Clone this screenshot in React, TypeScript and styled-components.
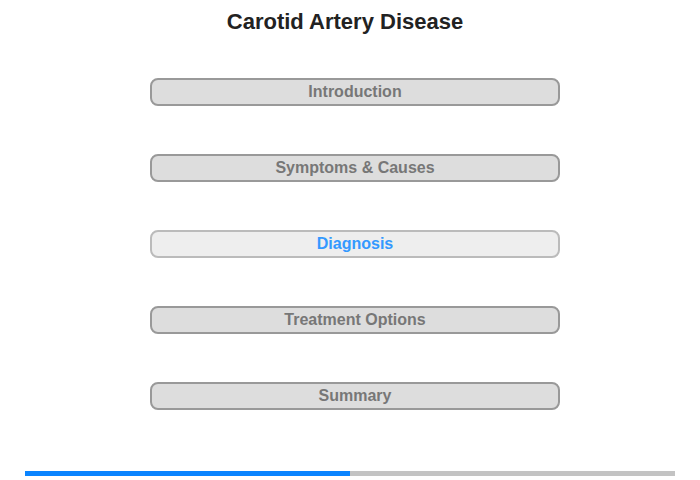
import React from "react";
import styled, { createGlobalStyle } from "styled-components";

const Global = createGlobalStyle`
  html, body { margin: 0; padding: 0; background: #fff; }
  body { font-family: "Liberation Sans", Arial, sans-serif; }
`;

const Page = styled.div`
  width: 700px;
  height: 480px;
  display: flex;
  flex-direction: column;
  box-sizing: border-box;
  padding-top: 9px;
`;

const Title = styled.h1`
  margin: 0;
  width: 690px;
  text-align: center;
  font-size: 22px;
  line-height: 26px;
  font-weight: bold;
  color: #222;
`;

const Menu = styled.div`
  display: flex;
  flex-direction: column;
  gap: 48px;
  margin: 43px 0 0 150px;
  width: 410px;
`;

const MenuButton = styled.button<{ $active?: boolean }>`
  box-sizing: border-box;
  width: 410px;
  height: 28px;
  border-radius: 8px;
  border: 2px solid ${(p) => (p.$active ? "#bbbbbb" : "#999999")};
  background: ${(p) => (p.$active ? "#eeeeee" : "#dddddd")};
  color: ${(p) => (p.$active ? "#3399ff" : "#777777")};
  font-family: "Liberation Sans", Arial, sans-serif;
  font-weight: bold;
  font-size: 16px;
  line-height: 24px;
  padding: 0;
  text-align: center;
  cursor: pointer;
`;

const Progress = styled.div`
  margin: 61px 0 0 25px;
  width: 650px;
  height: 5px;
  background: #c3c3c3;
  display: flex;
`;

const ProgressFill = styled.div`
  height: 100%;
  background: #0a84ff;
`;

const items = ["Introduction", "Symptoms & Causes", "Diagnosis", "Treatment Options", "Summary"];

export default function App() {
  return (
    <Page>
      <Global />
      <Title>Carotid Artery Disease</Title>
      <Menu>
        {items.map((t) => (
          <MenuButton key={t} $active={t === "Diagnosis"}>
            {t}
          </MenuButton>
        ))}
      </Menu>
      <Progress>
        <ProgressFill style={{ width: `${(325 / 650) * 100}%` }} />
      </Progress>
    </Page>
  );
}
